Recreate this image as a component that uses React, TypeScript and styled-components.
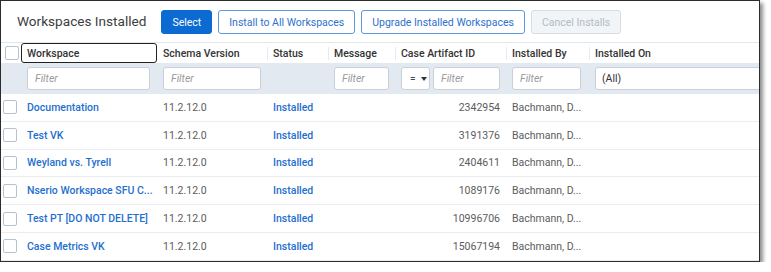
import styled, { createGlobalStyle } from "styled-components";

const GlobalStyle = createGlobalStyle`
    html, body {
        margin: 0;
        padding: 0;
        background: #ffffff;
    }
    body {
        font-family: Roboto, "Liberation Sans", Arial, sans-serif;
    }
`

const Frame = styled.div`
    width: 758px;
    height: 260px;
    border: 1px solid #2c2c2c;
    box-shadow: 3px 3px 4px rgba(0, 0, 0, 0.45);
    overflow: hidden;
    background: #fff;
`

const Toolbar = styled.div`
    display: flex;
    align-items: center;
    height: 42px;
    padding-left: 16px;
    box-sizing: border-box;
    border-bottom: 1px solid #e3e7ec;
    h1{
        margin: 0 15px 0 0;
        font-size: 13.6px;
        font-weight: 400;
        color: #3d3d3d;
        padding-bottom: 1px;
    }
`

const Actions = styled.div`
    display: flex;
    gap: 6px;
    margin-top: 1px;
`

const ActionButton = styled.button<{ $variant: "primary" | "outline" | "disabled" }>`
    height: 24px;
    padding: 0 10px;
    border-radius: 3px;
    font-family: Roboto, "Liberation Sans", sans-serif;
    font-size: 10.5px;
    border: 1px solid ${p => p.$variant === "primary" ? "#0b6bd3" : p.$variant === "outline" ? "#5d97dd" : "#d6dde5"};
    background: ${p => p.$variant === "primary" ? "#0b6bd3" : p.$variant === "outline" ? "#fff" : "#f2f5f8"};
    color: ${p => p.$variant === "primary" ? "#fff" : p.$variant === "outline" ? "#2d72cc" : "#b3bbc4"};
`

const COLS = "20px 136px 110px 61px 67px 111px 83px 1fr";

const HeaderRow = styled.div`
    display: grid;
    grid-template-columns: ${COLS};
    height: 20px;
    align-items: center;
`

const HeaderCell = styled.div<{ $focused?: boolean; $sep?: boolean }>`
    height: 100%;
    display: flex;
    align-items: center;
    padding-left: ${p => p.$focused ? "5px" : "6px"};
    box-sizing: border-box;
    font-size: 10.5px;
    font-weight: 500;
    color: #333;
    position: relative;
    border: ${p => p.$focused ? "1.5px solid #222" : "none"};
    border-radius: ${p => p.$focused ? "3px" : "0"};
    &::before{
        content: "";
        display: ${p => p.$sep ? "block" : "none"};
        position: absolute;
        left: 0;
        top: 4px;
        bottom: 3px;
        width: 1px;
        background: #e6e9ed;
    }
`

const FilterRow = styled.div`
    display: grid;
    grid-template-columns: ${COLS};
    height: 31px;
    align-items: center;
    background: #e3e9f1;
`

const FilterCell = styled.div`
    display: flex;
    gap: 3px;
    padding: 0 7px 0 6px;
`

const FilterInput = styled.div<{ $w?: number; $italic?: boolean }>`
    height: 23px;
    width: ${p => p.$w ? p.$w + "px" : "100%"};
    box-sizing: border-box;
    background: #fff;
    border: 1px solid #c8d0d9;
    border-radius: 3px;
    padding-left: ${p => p.$italic ? "7px" : "6px"};
    display: flex;
    align-items: center;
    font-size: 10.5px;
    font-style: ${p => p.$italic ? "italic" : "normal"};
    color: ${p => p.$italic ? "#9a9a9a" : "#333"};
    flex-shrink: 0;
`

const OpSelect = styled(FilterInput)`
    gap: 5px;
    padding-left: 8px;
    color: #444;
    font-size: 10px;
`

const Caret = styled.span`
    width: 0;
    height: 0;
    border-left: 3px solid transparent;
    border-right: 3px solid transparent;
    border-top: 4px solid #333;
`

const Row = styled.div`
    display: grid;
    grid-template-columns: ${COLS};
    height: 27.8px;
    align-items: center;
    border-bottom: 1px solid #e9edf1;
    box-sizing: border-box;
`

const Cell = styled.div<{ $link?: boolean; $right?: boolean }>`
    padding: ${p => p.$right ? "0 6px 0 0" : "0 0 0 6px"};
    text-align: ${p => p.$right ? "right" : "left"};
    font-size: 10.5px;
    font-weight: ${p => p.$link ? 500 : 400};
    color: ${p => p.$link ? "#1f6fd0" : "#5c5c5c"};
    white-space: nowrap;
    overflow: hidden;
`

const Check = styled.div`
    width: 12px;
    height: 12px;
    margin-left: 2px;
    border: 1px solid #b6c2cf;
    border-radius: 2px;
    background: #fff;
`

interface Workspace {
    name: string;
    id: string;
}

const rows: Workspace[] = [
    { name: "Documentation", id: "2342954" },
    { name: "Test VK", id: "3191376" },
    { name: "Weyland vs. Tyrell", id: "2404611" },
    { name: "Nserio Workspace SFU C...", id: "1089176" },
    { name: "Test PT [DO NOT DELETE]", id: "10996706" },
    { name: "Case Metrics VK", id: "15067194" },
]

export default function App(){
    return(
        <>
            <GlobalStyle/>
            <Frame>
                <Toolbar>
                    <h1>Workspaces Installed</h1>
                    <Actions>
                        <ActionButton $variant="primary">Select</ActionButton>
                        <ActionButton $variant="outline">Install to All Workspaces</ActionButton>
                        <ActionButton $variant="outline">Upgrade Installed Workspaces</ActionButton>
                        <ActionButton $variant="disabled">Cancel Installs</ActionButton>
                    </Actions>
                </Toolbar>
                <HeaderRow>
                    <HeaderCell style={{ paddingLeft: 2 }}><Check/></HeaderCell>
                    <HeaderCell $focused>Workspace</HeaderCell>
                    <HeaderCell>Schema Version</HeaderCell>
                    <HeaderCell $sep>Status</HeaderCell>
                    <HeaderCell $sep>Message</HeaderCell>
                    <HeaderCell $sep>Case Artifact ID</HeaderCell>
                    <HeaderCell $sep>Installed By</HeaderCell>
                    <HeaderCell $sep>Installed On</HeaderCell>
                </HeaderRow>
                <FilterRow>
                    <div/>
                    <FilterCell><FilterInput $italic>Filter</FilterInput></FilterCell>
                    <FilterCell><FilterInput $italic $w={98}>Filter</FilterInput></FilterCell>
                    <div/>
                    <FilterCell><FilterInput $italic $w={55}>Filter</FilterInput></FilterCell>
                    <FilterCell>
                        <OpSelect $w={29}>= <Caret/></OpSelect>
                        <FilterInput $italic $w={67}>Filter</FilterInput>
                    </FilterCell>
                    <FilterCell><FilterInput $italic $w={69}>Filter</FilterInput></FilterCell>
                    <FilterCell style={{ paddingRight: 0 }}><FilterInput $w={180}>(All)</FilterInput></FilterCell>
                </FilterRow>
                {rows.map(r => (
                    <Row key={r.id}>
                        <Check/>
                        <Cell $link>{r.name}</Cell>
                        <Cell>11.2.12.0</Cell>
                        <Cell $link>Installed</Cell>
                        <Cell/>
                        <Cell $right>{r.id}</Cell>
                        <Cell>Bachmann, D...</Cell>
                        <Cell/>
                    </Row>
                ))}
            </Frame>
        </>
    )
}
